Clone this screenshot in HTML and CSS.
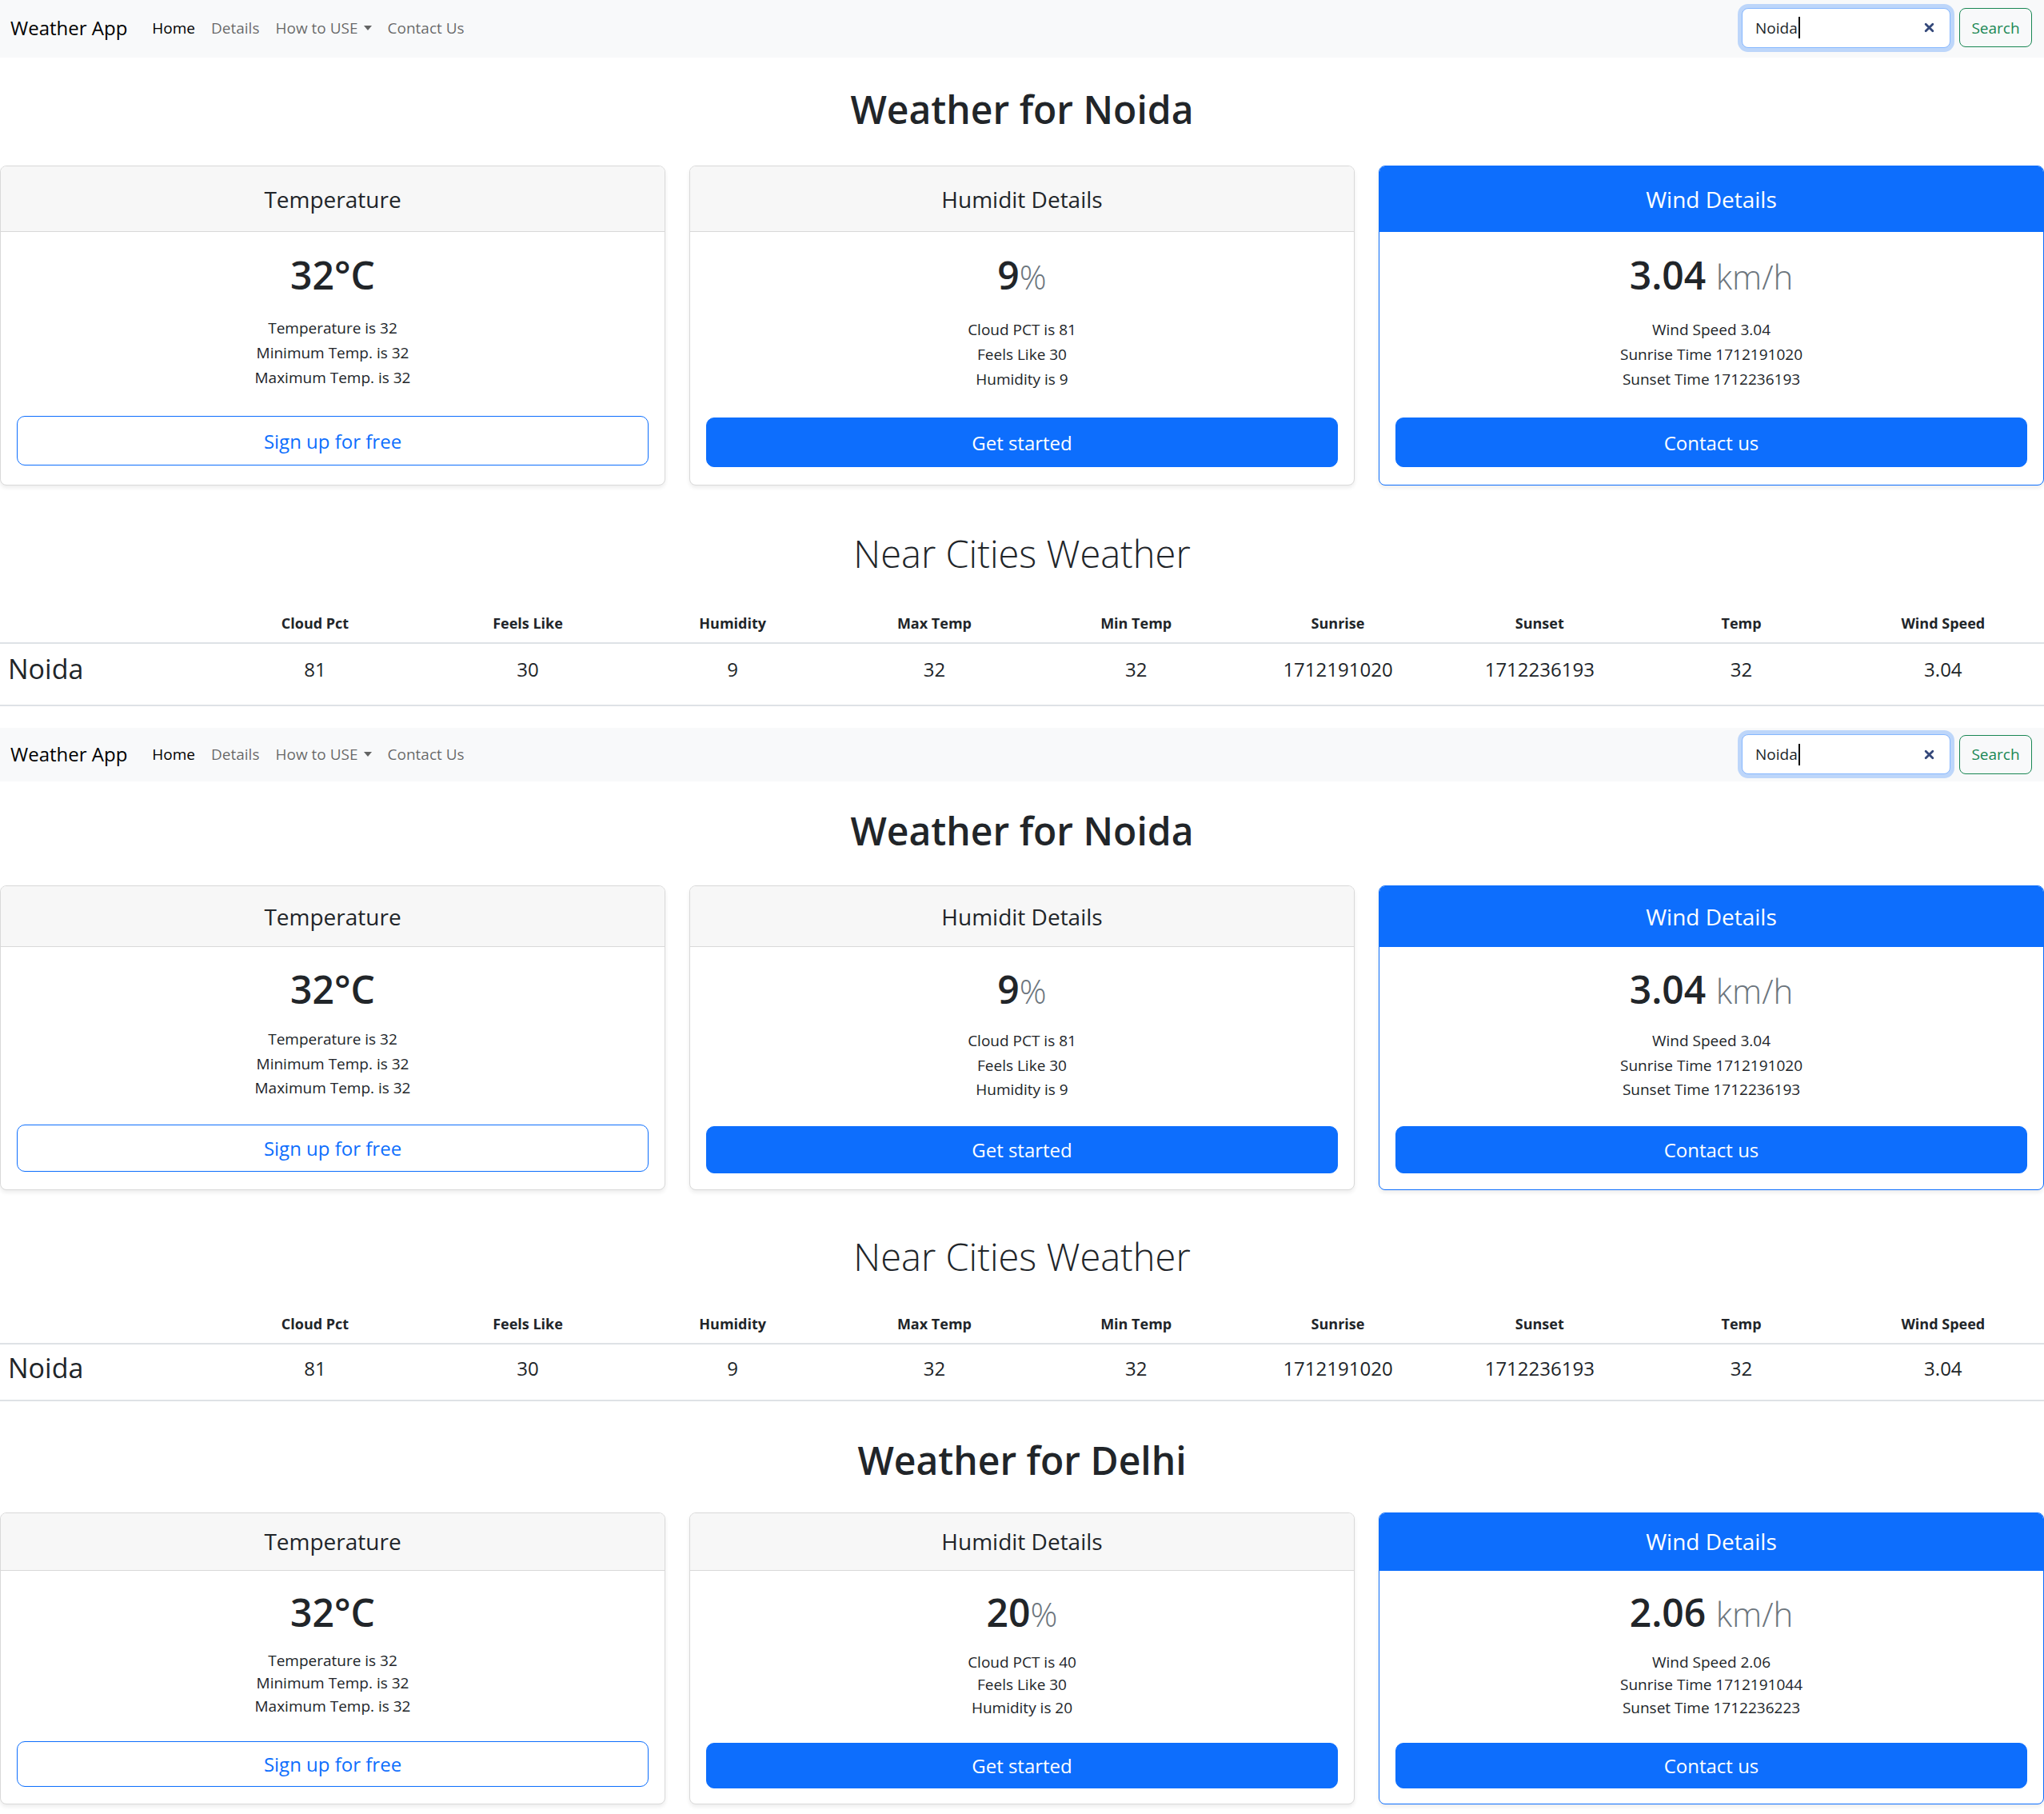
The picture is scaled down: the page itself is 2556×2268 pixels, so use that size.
FILE: index.html
```html
<!DOCTYPE html>
<html lang="en">
<head>
<meta charset="utf-8">
<title>Weather App</title>
<link rel="stylesheet" href="styles.css">
</head>
<body>

<nav class="navbar">
  <a class="brand" href="#">Weather App</a>
  <ul class="nav-links">
    <li><a class="nav-link active" href="#">Home</a></li>
    <li><a class="nav-link" href="#">Details</a></li>
    <li><a class="nav-link dropdown-toggle" href="#">How to USE</a></li>
    <li><a class="nav-link" href="#">Contact Us</a></li>
  </ul>
  <form class="search">
    <div class="search-input">
      <span class="search-text">Noida</span><span class="text-caret"></span>
      <svg class="search-clear" width="13" height="13" viewBox="0 0 12 12"><path d="M2 2 L10 10 M10 2 L2 10" stroke="#34487a" stroke-width="2.6" stroke-linecap="round"/></svg>
    </div>
    <button class="btn-search" type="button">Search</button>
  </form>
</nav>

<main class="page page-a">
  <h1 class="title t-a">Weather for Noida</h1>
  <div class="cards cards-a">
    <div class="card">
      <div class="card-header">Temperature</div>
      <div class="card-body">
        <h2 class="card-value">32°C</h2>
        <ul class="card-list">
          <li>Temperature is 32</li>
          <li>Minimum Temp. is 32</li>
          <li>Maximum Temp. is 32</li>
        </ul>
        <button class="btn btn-outline" type="button">Sign up for free</button>
      </div>
    </div>
    <div class="card">
      <div class="card-header">Humidit Details</div>
      <div class="card-body">
        <h2 class="card-value">9<span class="unit">%</span></h2>
        <ul class="card-list">
          <li>Cloud PCT is 81</li>
          <li>Feels Like 30</li>
          <li>Humidity is 9</li>
        </ul>
        <button class="btn btn-solid" type="button">Get started</button>
      </div>
    </div>
    <div class="card card-primary">
      <div class="card-header">Wind Details</div>
      <div class="card-body">
        <h2 class="card-value">3.04 <span class="unit">km/h</span></h2>
        <ul class="card-list">
          <li>Wind Speed 3.04</li>
          <li>Sunrise Time 1712191020</li>
          <li>Sunset Time 1712236193</li>
        </ul>
        <button class="btn btn-solid" type="button">Contact us</button>
      </div>
    </div>
  </div>

  <h2 class="near n-a">Near Cities Weather</h2>
  <div class="city-table table-a" role="table">
    <div class="trow thead" role="row">
      <div role="columnheader"></div>
      <div role="columnheader">Cloud Pct</div>
      <div role="columnheader">Feels Like</div>
      <div role="columnheader">Humidity</div>
      <div role="columnheader">Max Temp</div>
      <div role="columnheader">Min Temp</div>
      <div role="columnheader">Sunrise</div>
      <div role="columnheader">Sunset</div>
      <div role="columnheader">Temp</div>
      <div role="columnheader">Wind Speed</div>
    </div>
    <div class="trow tbody" role="row">
      <div class="city" role="rowheader">Noida</div>
      <div role="cell">81</div>
      <div role="cell">30</div>
      <div role="cell">9</div>
      <div role="cell">32</div>
      <div role="cell">32</div>
      <div role="cell">1712191020</div>
      <div role="cell">1712236193</div>
      <div role="cell">32</div>
      <div role="cell">3.04</div>
    </div>
  </div>
</main>

<nav class="navbar navbar-b">
  <a class="brand" href="#">Weather App</a>
  <ul class="nav-links">
    <li><a class="nav-link active" href="#">Home</a></li>
    <li><a class="nav-link" href="#">Details</a></li>
    <li><a class="nav-link dropdown-toggle" href="#">How to USE</a></li>
    <li><a class="nav-link" href="#">Contact Us</a></li>
  </ul>
  <form class="search">
    <div class="search-input">
      <span class="search-text">Noida</span><span class="text-caret"></span>
      <svg class="search-clear" width="13" height="13" viewBox="0 0 12 12"><path d="M2 2 L10 10 M10 2 L2 10" stroke="#34487a" stroke-width="2.6" stroke-linecap="round"/></svg>
    </div>
    <button class="btn-search" type="button">Search</button>
  </form>
</nav>

<main class="page page-b">
  <h1 class="title t-b">Weather for Noida</h1>
  <div class="cards cards-b">
    <div class="card">
      <div class="card-header">Temperature</div>
      <div class="card-body">
        <h2 class="card-value">32°C</h2>
        <ul class="card-list">
          <li>Temperature is 32</li>
          <li>Minimum Temp. is 32</li>
          <li>Maximum Temp. is 32</li>
        </ul>
        <button class="btn btn-outline" type="button">Sign up for free</button>
      </div>
    </div>
    <div class="card">
      <div class="card-header">Humidit Details</div>
      <div class="card-body">
        <h2 class="card-value">9<span class="unit">%</span></h2>
        <ul class="card-list">
          <li>Cloud PCT is 81</li>
          <li>Feels Like 30</li>
          <li>Humidity is 9</li>
        </ul>
        <button class="btn btn-solid" type="button">Get started</button>
      </div>
    </div>
    <div class="card card-primary">
      <div class="card-header">Wind Details</div>
      <div class="card-body">
        <h2 class="card-value">3.04 <span class="unit">km/h</span></h2>
        <ul class="card-list">
          <li>Wind Speed 3.04</li>
          <li>Sunrise Time 1712191020</li>
          <li>Sunset Time 1712236193</li>
        </ul>
        <button class="btn btn-solid" type="button">Contact us</button>
      </div>
    </div>
  </div>

  <h2 class="near n-b">Near Cities Weather</h2>
  <div class="city-table table-b" role="table">
    <div class="trow thead" role="row">
      <div role="columnheader"></div>
      <div role="columnheader">Cloud Pct</div>
      <div role="columnheader">Feels Like</div>
      <div role="columnheader">Humidity</div>
      <div role="columnheader">Max Temp</div>
      <div role="columnheader">Min Temp</div>
      <div role="columnheader">Sunrise</div>
      <div role="columnheader">Sunset</div>
      <div role="columnheader">Temp</div>
      <div role="columnheader">Wind Speed</div>
    </div>
    <div class="trow tbody" role="row">
      <div class="city" role="rowheader">Noida</div>
      <div role="cell">81</div>
      <div role="cell">30</div>
      <div role="cell">9</div>
      <div role="cell">32</div>
      <div role="cell">32</div>
      <div role="cell">1712191020</div>
      <div role="cell">1712236193</div>
      <div role="cell">32</div>
      <div role="cell">3.04</div>
    </div>
  </div>

  <h1 class="title t-c">Weather for Delhi</h1>
  <div class="cards cards-c">
    <div class="card">
      <div class="card-header">Temperature</div>
      <div class="card-body">
        <h2 class="card-value">32°C</h2>
        <ul class="card-list">
          <li>Temperature is 32</li>
          <li>Minimum Temp. is 32</li>
          <li>Maximum Temp. is 32</li>
        </ul>
        <button class="btn btn-outline" type="button">Sign up for free</button>
      </div>
    </div>
    <div class="card">
      <div class="card-header">Humidit Details</div>
      <div class="card-body">
        <h2 class="card-value">20<span class="unit">%</span></h2>
        <ul class="card-list">
          <li>Cloud PCT is 40</li>
          <li>Feels Like 30</li>
          <li>Humidity is 20</li>
        </ul>
        <button class="btn btn-solid" type="button">Get started</button>
      </div>
    </div>
    <div class="card card-primary">
      <div class="card-header">Wind Details</div>
      <div class="card-body">
        <h2 class="card-value">2.06 <span class="unit">km/h</span></h2>
        <ul class="card-list">
          <li>Wind Speed 2.06</li>
          <li>Sunrise Time 1712191044</li>
          <li>Sunset Time 1712236223</li>
        </ul>
        <button class="btn btn-solid" type="button">Contact us</button>
      </div>
    </div>
  </div>
</main>

</body>
</html>
```

FILE: styles.css
```css
* { box-sizing: border-box; }

html, body { margin: 0; padding: 0; }

body {
  width: 2556px;
  font-family: "Open Sans", "Noto Sans", "Liberation Sans", sans-serif;
  color: #212529;
  background: #fff;
}

/* ---------- navbar ---------- */
.navbar {
  display: flex;
  align-items: center;
  height: 72px;
  padding: 0 15px 3px 13px;
  background: #f8f9fa;
}
.navbar-b {
  height: 67px;
  padding-bottom: 1px;
}
.brand {
  font-size: 24px;
  line-height: 30px;
  color: #000;
  text-decoration: none;
  margin-right: 21px;
}
.nav-links {
  display: flex;
  flex: 1;
  list-style: none;
  margin: 0;
  padding: 0;
}
.nav-link {
  display: block;
  padding: 0 10px;
  font-size: 19px;
  line-height: 28px;
  color: rgba(0, 0, 0, .6);
  text-decoration: none;
}
.nav-link.active { color: #000; }
.dropdown-toggle::after {
  content: "";
  display: inline-block;
  margin-left: 7px;
  vertical-align: 4px;
  border-top: 6px solid;
  border-left: 5px solid transparent;
  border-right: 5px solid transparent;
}

.search {
  display: flex;
  align-items: center;
  gap: 11px;
  margin: 0;
}
.search-input {
  display: flex;
  align-items: center;
  width: 261px;
  height: 50px;
  padding: 0 19px 0 16px;
  border: 1px solid #86b7fe;
  border-radius: 8px;
  background: #fff;
  box-shadow: 0 0 0 5px rgba(13, 110, 253, .25);
  font-size: 19px;
  color: #212529;
}
.text-caret {
  width: 2px;
  height: 27px;
  margin-left: 1px;
  background: #000;
}
.search-clear { margin-left: auto; }
.btn-search {
  width: 91px;
  height: 49px;
  border: 1px solid #198754;
  border-radius: 8px;
  background: transparent;
  color: #198754;
  font-family: inherit;
  font-size: 19px;
}

/* ---------- headings ---------- */
.title {
  margin: 0;
  text-align: center;
  font-size: 48px;
  line-height: 60px;
  font-weight: 600;
}
.t-a { margin: 35px 0 40px; }
.t-b { margin: 32px 0 38px; }
.t-c { margin: 44px 0 35px; }

.near {
  margin: 0;
  text-align: center;
  font-size: 47px;
  line-height: 60px;
  font-weight: 300;
}
.n-a { margin: 55px 0 33px; }
.n-b { margin: 53px 0 30px; }

/* ---------- cards ---------- */
.cards {
  display: grid;
  grid-template-columns: repeat(3, 1fr);
  gap: 30px;
}
.cards-a { --hdr: 82px; --pt: 24px; --lgap: 21px; --lh: 31px; --bgap: 32px; --btnh: 62px; --pb: 22px; }
.cards-b { --hdr: 76px; --pt: 23px; --lgap: 17px; --lh: 30.5px; --bgap: 30px; --btnh: 59px; --pb: 20px; }
.cards-c { --hdr: 72px; --pt: 22px; --lgap: 16px; --lh: 28.5px; --bgap: 30px; --btnh: 57px; --pb: 19px; margin-bottom: 12px; }

.card {
  border: 1px solid #d9d9d9;
  border-radius: 8px;
  background: #fff;
  box-shadow: 0 3px 5px rgba(0, 0, 0, .075);
  text-align: center;
  overflow: hidden;
}
.card-primary { border-color: #0d6efd; }
.card-header {
  display: flex;
  align-items: center;
  justify-content: center;
  height: var(--hdr);
  background: #f7f7f7;
  border-bottom: 1px solid #d9d9d9;
  font-size: 28px;
}
.card-primary .card-header {
  background: #0d6efd;
  border-bottom-color: #0d6efd;
  color: #fff;
}
.card-body { padding: var(--pt) 20px var(--pb); }
.card-value {
  margin: 0;
  font-size: 48px;
  line-height: 60px;
  font-weight: 600;
}
.unit {
  font-size: 42px;
  font-weight: 300;
  color: #6c757d;
}
.card-list {
  list-style: none;
  margin: var(--lgap) 0 var(--bgap);
  padding: 0;
  font-size: 19px;
  line-height: var(--lh);
}
.btn {
  display: flex;
  align-items: center;
  justify-content: center;
  width: 100%;
  height: var(--btnh);
  border: 1px solid #0d6efd;
  border-radius: 10px;
  font-family: inherit;
  font-size: 24px;
}
.btn-outline { background: #fff; color: #0d6efd; }
.btn-solid { background: #0d6efd; color: #fff; }

/* ---------- near cities table ---------- */
.table-a { margin-bottom: 27px; }
.trow {
  display: grid;
  grid-template-columns: 258px 272px 260px repeat(7, 1fr);
  align-items: center;
  text-align: center;
  border-bottom: 2px solid #dee2e6;
}
.thead {
  height: 50px;
  font-size: 18px;
  font-weight: 700;
}
.tbody {
  font-size: 24px;
  padding-bottom: 14px;
}
.table-a .tbody { height: 78px; }
.table-b .tbody { height: 71px; padding-bottom: 10px; }
.city {
  text-align: left;
  padding-left: 10px;
  font-size: 34px;
}
```
